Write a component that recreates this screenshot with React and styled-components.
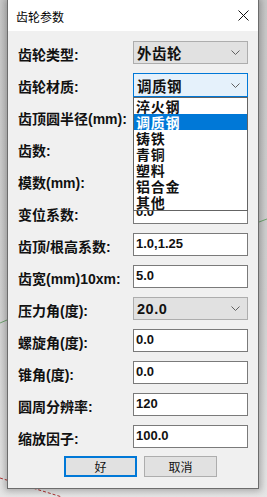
import React from "react";
import styled, { createGlobalStyle } from "styled-components";

const GlobalStyle = createGlobalStyle`
  html, body {
    margin: 0;
    padding: 0;
    width: 267px;
    height: 497px;
    overflow: hidden;
    background: linear-gradient(180deg, #c9c9c9 0%, #d2d2d2 60%, #e6e6e6 100%);
  }
`;

const fields = [
  { label: "齿轮类型:", kind: "combo", value: "外齿轮" },
  { label: "齿轮材质:", kind: "open", value: "调质钢" },
  { label: "齿顶圆半径(mm):", kind: "text", value: "" },
  { label: "齿数:", kind: "text", value: "" },
  { label: "模数(mm):", kind: "text", value: "" },
  { label: "变位系数:", kind: "text", value: "0.0" },
  { label: "齿顶/根高系数:", kind: "text", value: "1.0,1.25" },
  { label: "齿宽(mm)10xm:", kind: "text", value: "5.0" },
  { label: "压力角(度):", kind: "combo", value: "20.0" },
  { label: "螺旋角(度):", kind: "text", value: "0.0" },
  { label: "锥角(度):", kind: "text", value: "0.0" },
  { label: "圆周分辨率:", kind: "text", value: "120" },
  { label: "缩放因子:", kind: "text", value: "100.0" },
];

const materials = ["淬火钢", "调质钢", "铸铁", "青铜", "塑料", "铝合金", "其他"];

function Chevron() {
  return (
    <ChevronIcon width="9" height="5" viewBox="0 0 9 5">
      <polyline points="0.5,0.5 4.5,4.5 8.5,0.5" fill="none" stroke="#606060" strokeWidth="1" />
    </ChevronIcon>
  );
}

function App() {
  return (
    <Screen>
      <GlobalStyle />
      <Backdrop width="267" height="497" viewBox="0 0 267 497">
        <line x1="259" y1="222" x2="267" y2="219" stroke="#6fa56f" strokeWidth="1" />
        <line x1="0" y1="323" x2="7" y2="320" stroke="#6fa56f" strokeWidth="1" />
        <line x1="0" y1="478" x2="62" y2="497" stroke="#b03030" strokeWidth="1" strokeDasharray="3 2" />
      </Backdrop>

      <Dialog>
        <TitleBar>
          <Title>齿轮参数</Title>
          <CloseIcon width="11" height="11" viewBox="0 0 11 11">
            <path d="M0.5 0.5 L10.5 10.5 M10.5 0.5 L0.5 10.5" stroke="#111" strokeWidth="1" />
          </CloseIcon>
        </TitleBar>

        <Body>
          {fields.map((f) => (
            <Row key={f.label}>
              <Label>{f.label}</Label>
              {f.kind === "text" && <TextBox>{f.value}</TextBox>}
              {f.kind === "combo" && (
                <Combo>
                  <span>{f.value}</span>
                  <Chevron />
                </Combo>
              )}
              {f.kind === "open" && (
                <Combo $focused>
                  <span>{f.value}</span>
                  <Chevron />
                  <DropList>
                    {materials.map((m) => (
                      <DropItem key={m} $selected={m === f.value}>
                        {m}
                      </DropItem>
                    ))}
                  </DropList>
                </Combo>
              )}
            </Row>
          ))}

          <ButtonRow>
            <Button $default>好</Button>
            <Button>取消</Button>
          </ButtonRow>
        </Body>
      </Dialog>
    </Screen>
  );
}

const Screen = styled.div`
  position: relative;
  width: 267px;
  height: 497px;
  display: flex;
  align-items: flex-start;
  padding-left: 7px;
  box-sizing: border-box;
`;

const Backdrop = styled.svg`
  position: absolute;
  left: 0;
  top: 0;
  display: block;
`;

const Dialog = styled.div`
  position: relative;
  width: 252px;
  height: 489px;
  box-sizing: border-box;
  border: 1px solid #6c6c6c;
  border-top: none;
  background: #f0f0f0;
  box-shadow: 0 0 7px 2px rgba(0, 0, 0, 0.28);
  display: flex;
  flex-direction: column;
`;

const TitleBar = styled.div`
  height: 31px;
  background: #ffffff;
  display: flex;
  align-items: center;
  justify-content: space-between;
  padding: 0 9px 0 8px;
`;

const Title = styled.div`
  font-family: "Noto Sans CJK SC", sans-serif;
  font-size: 12px;
  color: #000;
  padding-top: 1px;
`;

const CloseIcon = styled.svg`
  display: block;
`;

const Body = styled.div`
  flex: 1;
  display: flex;
  flex-direction: column;
  gap: 9px;
  padding: 10px 0 0 10px;
`;

const Row = styled.div`
  display: grid;
  grid-template-columns: 115px 115px;
  align-items: center;
  height: 23px;
`;

const Label = styled.div`
  font-family: "Liberation Sans", "Noto Sans CJK SC", sans-serif;
  font-weight: 700;
  font-size: 14px;
  color: #111;
  white-space: nowrap;
  padding-top: 2px;
`;

const TextBox = styled.div`
  height: 23px;
  box-sizing: border-box;
  border: 1px solid #7a7a7a;
  background: #fff;
  font-family: "Liberation Sans", "Noto Sans CJK SC", sans-serif;
  font-weight: 700;
  font-size: 13px;
  line-height: 19px;
  padding-left: 2px;
  color: #111;
`;

const Combo = styled.div`
  position: relative;
  height: ${(p) => (p.$focused ? "24px" : "23px")};
  box-sizing: border-box;
  border: 1px solid ${(p) => (p.$focused ? "#0078d7" : "#adadad")};
  background: ${(p) => (p.$focused ? "#e5f1fb" : "#e1e1e1")};
  display: flex;
  align-items: center;
  justify-content: space-between;
  padding: 0 7px 0 3px;
  font-family: "Liberation Sans", "Noto Sans CJK SC", sans-serif;
  font-weight: 700;
  font-size: 14.5px;
  letter-spacing: 0.5px;
  color: #111;
`;

const ChevronIcon = styled.svg`
  display: block;
`;

const DropList = styled.div`
  position: absolute;
  left: -1px;
  top: 23px;
  width: 115px;
  box-sizing: border-box;
  border: 1px solid #646464;
  background: #fff;
  display: flex;
  flex-direction: column;
  z-index: 2;
`;

const DropItem = styled.div`
  height: 16px;
  line-height: 16px;
  padding-left: 2px;
  font-family: "Noto Sans CJK SC", sans-serif;
  font-weight: 700;
  font-size: 14px;
  letter-spacing: 0.8px;
  background: ${(p) => (p.$selected ? "#0078d7" : "#fff")};
  color: ${(p) => (p.$selected ? "#fff" : "#111")};
`;

const ButtonRow = styled.div`
  display: flex;
  gap: 7px;
  padding-left: 46px;
  margin-top: -1px;
`;

const Button = styled.div`
  width: 73px;
  height: 21px;
  box-sizing: border-box;
  border: ${(p) => (p.$default ? "2px solid #0078d7" : "1px solid #adadad")};
  background: #e1e1e1;
  display: flex;
  align-items: center;
  justify-content: center;
  font-family: "Noto Sans CJK SC", sans-serif;
  font-size: 12px;
  color: #111;
`;

export default App;
